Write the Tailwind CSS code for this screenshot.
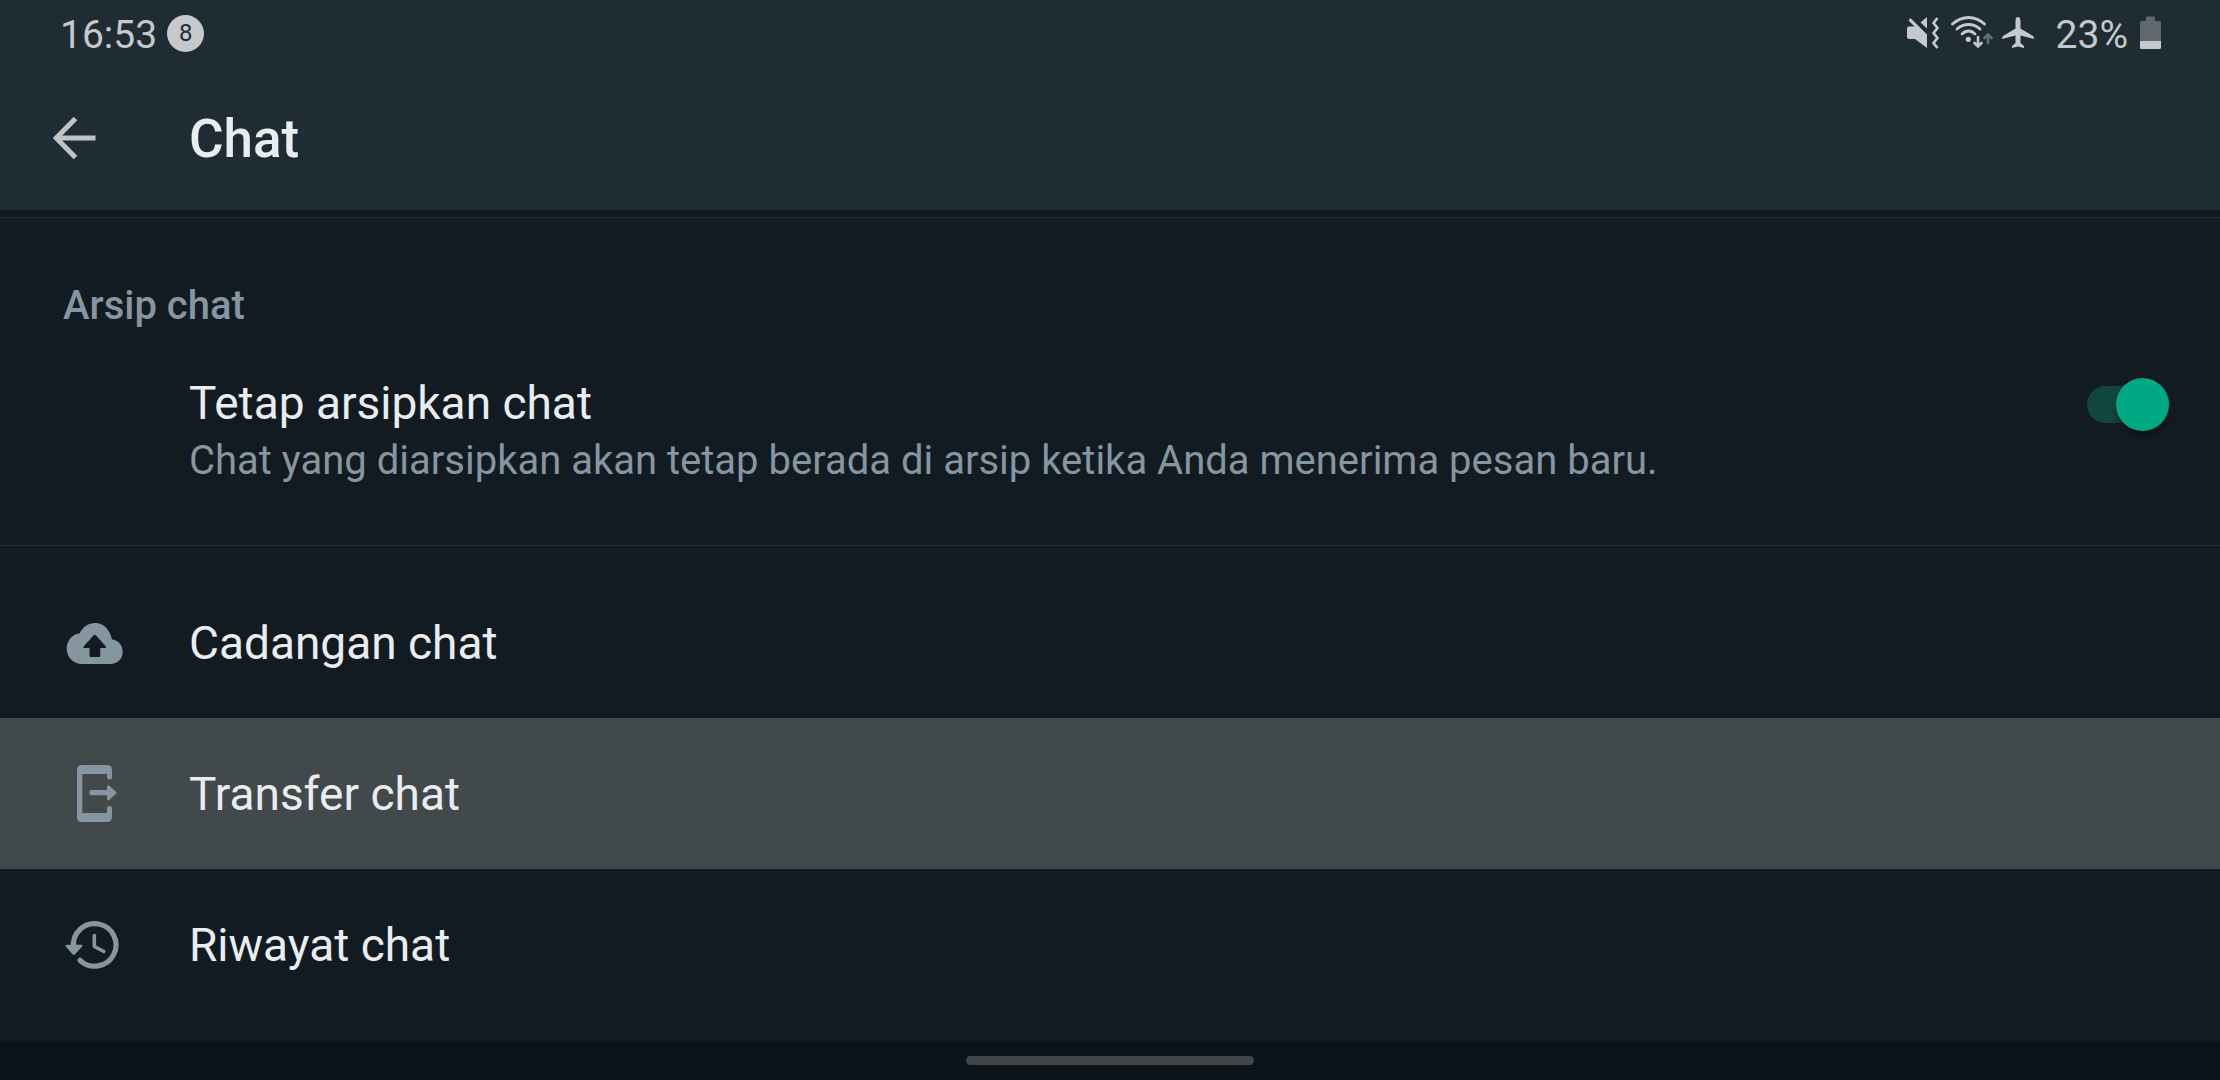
<!DOCTYPE html>
<html lang="id">
<head>
<meta charset="utf-8">
<meta name="viewport" content="width=device-width, initial-scale=1">
<title>Chat</title>
<script src="https://cdn.jsdelivr.net/npm/@tailwindcss/browser@4"></script>
</head>
<body class="flex min-h-screen flex-col bg-[#121b22] font-[Roboto,sans-serif] text-[#e9edef]">
  <header class="bg-[#202c33]">
    <!-- Status bar -->
    <div class="flex h-[66px] items-center justify-between pr-[59px] pl-[60px] text-[39px] leading-[48px] text-[#c5c9cb]">
      <div class="flex items-center gap-[10px]">
        <time class="pt-[3px]">16:53</time>
        <span class="flex size-[37px] items-center justify-center rounded-full bg-[#c5c9cb] text-2xl text-[#202c33]">8</span>
      </div>
      <div class="flex items-center">
        <svg class="mr-3 h-[34px] w-8" viewBox="0 0 32 34" fill="currentColor" role="img" aria-label="Senyap">
          <path d="M3.500 2L20 18.500V32L8 23H2Q0 23 0 21V12.500Q0 10.500 2 10.500H7.500L1.500 4.500Z"/>
          <path d="M20 1V12.500L13.500 6.500Z"/>
          <path d="M30.500 2L26.500 7L30.500 12L26.500 17L30.500 22L26.500 27L30.500 32" fill="none" stroke="currentColor" stroke-width="2.800" stroke-linejoin="round"/>
        </svg>
        <svg class="mr-[9px] h-[34px] w-[42px]" viewBox="0 0 42 34" fill="none" stroke="currentColor" stroke-width="2.800" stroke-linecap="round" role="img" aria-label="Wi-Fi">
          <path d="M1.500 8Q9 1.500 17.500 1.500T33.500 8"/>
          <path d="M6 13Q11 8.500 17.500 8.500T29 13"/>
          <path d="M11 18Q14 15 17.500 15T24 18"/>
          <circle cx="17.300" cy="23.300" r="2.600" fill="currentColor" stroke="none"/>
          <path d="M27 21V30M23.500 27L27 30.500L30.500 27" stroke-width="2.600"/>
          <path d="M37 27V19M33.500 22L37 18.500L40.500 22" stroke="#656e73" stroke-width="2.600"/>
        </svg>
        <svg class="mr-[21px] h-[34px] w-[33px]" viewBox="0 0 33 34" fill="currentColor" role="img" aria-label="Mode pesawat">
          <path d="M16 1C17.700 1 18.500 3 18.500 5V12.500L31 20Q32 20.700 32 23L18.500 19.500V27L22 30V32L16 30.500L10 32V30L13.500 27V19.500L0 23Q0 20.700 1 20L13.500 12.500V5C13.500 3 14.300 1 16 1Z"/>
        </svg>
        <span class="mr-3 pt-[3px]">23%</span>
        <svg class="h-[34px] w-[21px]" viewBox="0 0 21 34" role="img" aria-label="Baterai">
          <path d="M7 0.500H14Q15 0.500 15 1.500V5H19.500Q21 5 21 6.500V25H0V6.500Q0 5 1.500 5H6V1.500Q6 0.500 7 0.500Z" fill="#5e686d"/>
          <path d="M0 25H21V31.500Q21 33 19.500 33H1.500Q0 33 0 31.500Z" fill="currentColor"/>
        </svg>
      </div>
    </div>
    <!-- App bar -->
    <div class="flex h-36 items-center gap-[93px] pl-[53px]">
      <button type="button" aria-label="Kembali" class="text-[#bfc3c6]">
        <svg class="size-[43px]" viewBox="0 0 43 43" fill="none" stroke="currentColor" stroke-width="5"><path d="M42.500 21H4M22.500 1.500L3.300 21L22.500 40.500"/></svg>
      </button>
      <h1 class="pt-[2px] text-[53px] leading-[64px] font-medium">Chat</h1>
    </div>
  </header>

  <main class="grow">
    <div class="h-2 border-b border-[#232d34] bg-[#0f191e]"></div>
    <section class="border-b border-[#232d34] pt-16 pr-[51px] pb-14">
      <h2 class="pl-[63px] text-[40px] leading-[48px] font-medium text-[#8696a0]">Arsip chat</h2>
      <div class="mt-[45px] flex items-start justify-between pl-[189px]">
        <div>
          <label for="keep" class="block text-[46px] leading-[56px]">Tetap arsipkan chat</label>
          <p id="keep-note" class="mt-[2px] text-[40px] leading-[56px] text-[#8696a0]">Chat yang diarsipkan akan tetap berada di arsip ketika Anda menerima pesan baru.</p>
        </div>
        <input id="keep" type="checkbox" role="switch" checked aria-describedby="keep-note" class="mt-[11px] flex h-[37px] w-[82px] shrink-0 appearance-none items-center rounded-full bg-[#10463f] before:size-[53px] before:shrink-0 before:rounded-full before:bg-[#3b4a54] before:shadow-md before:shadow-black/40 before:content-[''] checked:justify-end checked:before:bg-[#00a884]">
      </div>
    </section>

    <nav class="pt-[21px] text-[46px] leading-[56px]">
      <a href="#cadangan" class="flex h-[151px] items-center gap-[63px] pl-16">
        <svg class="h-[61px] w-[62px] text-[#8696a0]" viewBox="0 0 62 61" fill="currentColor" fill-rule="evenodd" aria-hidden="true">
          <path d="M48 27.500C46 17.500 39.500 11 31.300 11C24.500 11 18.500 15 15.500 21.600C8 22.300 2.700 29 2.700 36.800C2.700 45.500 9.500 52 18 52H46.500C53.500 52 58.700 46.500 58.700 39.700C58.700 33 54 27.900 48 27.500ZM29.700 23.300Q30.700 22.300 31.700 23.300L41.500 34Q43 36 41 36H36.300V43.500Q36.300 45 34.800 45H27Q25.500 45 25.500 43.500V36H20.500Q18.500 36 20 34Z"/>
        </svg>
        <span>Cadangan chat</span>
      </a>
      <a href="#transfer" class="flex h-[151px] items-center gap-[63px] bg-[#42494b] pl-16">
        <svg class="h-[61px] w-[62px] text-[#8696a0]" viewBox="0 0 62 61" fill="currentColor" aria-hidden="true">
          <path d="M18 2H43Q48 2 48 7V14Q48 16.500 45.500 16.500T43 14V11H18.300V50H43V45.500Q43 43 45.500 43T48 45.500V54Q48 59 43 59H18Q13 59 13 54V7Q13 2 18 2Z"/>
          <path d="M28 27H43V23.500Q43.500 21.500 45.500 22.800L52.200 29Q53 29.800 52.200 30.600L45.500 36.700Q43.500 38 43 36V32.300H28Q25.300 32.300 25.300 29.700T28 27Z"/>
        </svg>
        <span>Transfer chat</span>
      </a>
      <a href="#riwayat" class="flex h-[151px] items-center gap-[63px] pl-16">
        <svg class="h-[61px] w-[62px] text-[#8696a0]" viewBox="0 0 62 61" fill="none" stroke="currentColor" stroke-linecap="round" stroke-linejoin="round" aria-hidden="true">
          <path d="M9.500 33A21.300 21.300 0 1 1 16 46.300" stroke-width="5.200"/>
          <path d="M2.500 31.800H17.500L9.800 40Z" fill="currentColor" stroke-width="2"/>
          <path d="M30.300 21.500V32.500L39.800 37.500" stroke-width="3.600"/>
        </svg>
        <span>Riwayat chat</span>
      </a>
    </nav>
  </main>

  <!-- Gesture bar -->
  <footer class="flex h-[39px] items-center justify-center bg-[#0b141a]">
    <div class="h-[9px] w-72 rounded-full bg-[#434648]"></div>
  </footer>
</body>
</html>
